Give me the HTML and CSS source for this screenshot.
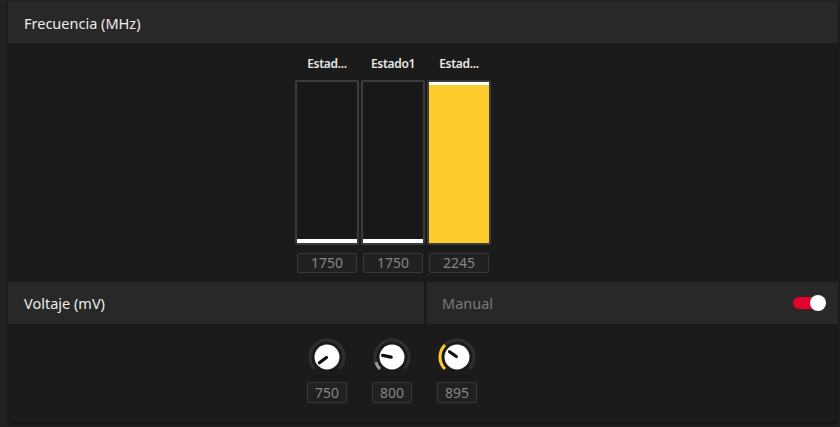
FILE: index.html
```
<!DOCTYPE html>
<html lang="es">
<head>
<meta charset="utf-8">
<title>Frecuencia</title>
<link rel="stylesheet" href="styles.css">
</head>
<body>
<div class="panel">
  <div class="head"><span class="title">Frecuencia (MHz)</span></div>
  <div class="freq">
    <div class="col">
      <div class="label">Estad...</div>
      <div class="bar"><div class="fill" style="height:0%"></div></div>
      <div class="val">1750</div>
    </div>
    <div class="col">
      <div class="label">Estado1</div>
      <div class="bar"><div class="fill" style="height:0%"></div></div>
      <div class="val">1750</div>
    </div>
    <div class="col">
      <div class="label">Estad...</div>
      <div class="bar"><div class="fill active" style="height:100%"></div></div>
      <div class="val">2245</div>
    </div>
  </div>
  <div class="row2">
    <div class="cell left"><span class="title">Voltaje (mV)</span></div>
    <div class="cell right">
      <span class="muted">Manual</span>
      <span class="toggle"><span class="knobdot"></span></span>
    </div>
  </div>
  <div class="volt">
    <div class="kcol">
      <svg class="knob" width="40" height="40" viewBox="0 0 40 40">
        <path d="M7.98 32.02 A17 17 0 1 1 32.02 32.02" fill="none" stroke="#2f2f2f" stroke-width="3"/>
        <circle cx="20" cy="20" r="12.5" fill="#fff"/>
        <line x1="19.5" y1="20.4" x2="12.4" y2="25.8" stroke="#111" stroke-width="3.2" stroke-linecap="round"/>
      </svg>
      <div class="kval">750</div>
    </div>
    <div class="kcol">
      <svg class="knob" width="40" height="40" viewBox="0 0 40 40">
        <path d="M7.98 32.02 A17 17 0 1 1 32.02 32.02" fill="none" stroke="#2f2f2f" stroke-width="3"/>
        <path d="M7.98 32.02 A17 17 0 0 1 3.84 25.26" fill="none" stroke="#9a9a9a" stroke-width="3"/>
        <circle cx="20" cy="20" r="12.5" fill="#fff"/>
        <line x1="19.2" y1="20.1" x2="10.6" y2="18.4" stroke="#111" stroke-width="3.2" stroke-linecap="round"/>
      </svg>
      <div class="kval">800</div>
    </div>
    <div class="kcol">
      <svg class="knob" width="40" height="40" viewBox="0 0 40 40">
        <path d="M7.98 32.02 A17 17 0 1 1 32.02 32.02" fill="none" stroke="#2f2f2f" stroke-width="3"/>
        <path d="M7.98 32.02 A17 17 0 0 1 7.98 7.98" fill="none" stroke="#fecb2f" stroke-width="3"/>
        <circle cx="20" cy="20" r="12.5" fill="#fff"/>
        <line x1="19.4" y1="19.5" x2="12.5" y2="14.7" stroke="#111" stroke-width="3.2" stroke-linecap="round"/>
      </svg>
      <div class="kval">895</div>
    </div>
  </div>
</div>
</body>
</html>
```
FILE: styles.css
```
* { box-sizing: border-box; }
html, body { height: 100%; }
body {
  margin: 0;
  padding: 2px 2px 0 8px;
  background: #222222;
  font-family: "Noto Sans", "Open Sans", sans-serif;
  color: #e8e8e8;
}
.panel {
  width: 830px;
  background: #1b1b1b;
  box-shadow: 0 2px 4px rgba(0,0,0,0.5);
}
.head {
  height: 41px;
  background: #282828;
  display: flex;
  align-items: center;
  padding-left: 16px;
}
.title {
  font-size: 14.5px;
  color: #ececec;
}
.freq {
  height: 239px;
  display: flex;
  justify-content: center;
  gap: 2px;
  padding-top: 13px;
  padding-right: 60px;
}
.col {
  width: 64px;
  display: flex;
  flex-direction: column;
  align-items: center;
}
.label {
  height: 16px;
  line-height: 16px;
  font-size: 12px;
  font-weight: 600;
  color: #e8e8e8;
  margin-bottom: 8px;
  letter-spacing: -0.3px;
}
.bar {
  width: 64px;
  height: 165px;
  border: 2px solid #3b3b3b;
  border-radius: 2px;
  background: #181818;
  display: flex;
  flex-direction: column;
  justify-content: flex-end;
}
.fill {
  border-top: 4px solid #ffffff;
  background: #fecb2f;
}
.fill.active { border-top-width: 3px; }
.val {
  margin-top: 8px;
  width: 60px;
  height: 20px;
  border: 1px solid #383838;
  border-radius: 2px;
  background: #212121;
  color: #858585;
  font-size: 14px;
  line-height: 18px;
  text-align: center;
}
.row2 {
  height: 42px;
  display: flex;
  gap: 3px;
}
.cell {
  background: #282828;
  display: flex;
  align-items: center;
  padding-left: 16px;
}
.cell.left { width: 416px; }
.cell.right {
  flex: 1;
  padding-left: 15px;
  padding-right: 12px;
  justify-content: space-between;
}
.muted {
  font-size: 14.5px;
  color: #7a7a7a;
}
.toggle {
  position: relative;
  width: 33px;
  height: 12px;
  border-radius: 6px;
  background: #e3002b;
}
.knobdot {
  position: absolute;
  right: 0;
  top: -2px;
  width: 16px;
  height: 16px;
  border-radius: 50%;
  background: #ffffff;
}
.volt {
  height: 98px;
  display: flex;
  justify-content: center;
  gap: 25px;
  padding-top: 13px;
  padding-right: 62px;
}
.kcol {
  width: 40px;
  display: flex;
  flex-direction: column;
  align-items: center;
}
.knob { display: block; }
.kval {
  margin-top: 5px;
  width: 40px;
  height: 21px;
  border: 1px solid #383838;
  border-radius: 2px;
  background: #212121;
  color: #858585;
  font-size: 14px;
  line-height: 19px;
  text-align: center;
}
```
